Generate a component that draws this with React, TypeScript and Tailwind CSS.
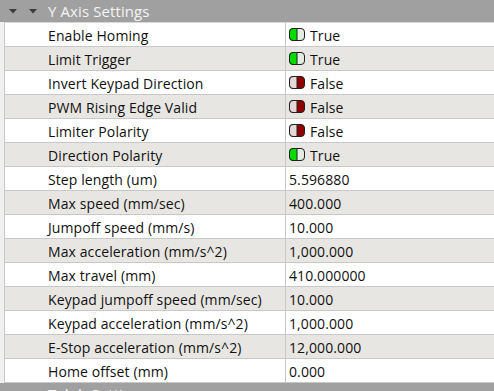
const rows: [string, string | boolean][] = [
  ["Enable Homing", true],
  ["Limit Trigger", true],
  ["Invert Keypad Direction", false],
  ["PWM Rising Edge Valid", false],
  ["Limiter Polarity", false],
  ["Direction Polarity", true],
  ["Step length (um)", "5.596880"],
  ["Max speed (mm/sec)", "400.000"],
  ["Jumpoff speed (mm/s)", "10.000"],
  ["Max acceleration (mm/s^2)", "1,000.000"],
  ["Max travel (mm)", "410.000000"],
  ["Keypad jumpoff speed (mm/sec)", "10.000"],
  ["Keypad acceleration (mm/s^2)", "1,000.000"],
  ["E-Stop acceleration (mm/s^2)", "12,000.000"],
  ["Home offset (mm)", "0.000"],
];

function Toggle({ on }: { on: boolean }) {
  return (
    <svg width="16" height="13" viewBox="0 0 16 13" className="shrink-0">
      <rect x="0.5" y="0.5" width="15" height="12" rx="3.5" fill={on ? "#e4ece4" : "#900000"} stroke="#202020" />
      <path
        d="M4 0.5 H8 V12.5 H4 A3.5 3.5 0 0 1 0.5 9 V4 A3.5 3.5 0 0 1 4 0.5 Z"
        fill={on ? "#00dc00" : "#e6d8d8"}
        stroke="#202020"
      />
    </svg>
  );
}

function Caret() {
  return (
    <svg width="8" height="5" viewBox="0 0 8 5">
      <path d="M0 0 H8 L4 4.5 Z" fill="#3c3c3c" />
    </svg>
  );
}

export default function App() {
  return (
    <div
      className="w-[494px] h-[391px] overflow-hidden bg-white text-[14px] text-[#111] tracking-[0.1px]"
      style={{ fontFamily: '"Segoe UI", "Open Sans", "Noto Sans", sans-serif' }}
    >
      {/* group header */}
      <div className="h-[22px] bg-[#a0a0a0] flex items-center text-[#f4f4f4] text-[15px]">
        <div className="w-[24px] flex justify-center pl-[2px]">
          <Caret />
        </div>
        <div className="w-[18px] flex justify-center">
          <Caret />
        </div>
        <span className="pl-[6px]">Y Axis Settings</span>
      </div>

      <div className="flex">
        <div className="w-[5px] bg-[#f0f0f0] border-r border-[#c8c8c8]" />
        <div className="flex-1 border-t border-[#d8d8d8]">
          {rows.map(([label, value], i) => (
            <div
              key={label}
              className={`flex h-[24px] border-b border-[#c8c8c8] ${i % 2 ? "bg-[#e8e6e3]" : "bg-white"}`}
            >
              <div className="w-[281px] pl-[43px] pt-[1px] flex items-center border-r border-[#c8c8c8]">{label}</div>
              <div className="flex-1 flex items-center pl-[3px] gap-[5px]">
                {typeof value === "boolean" ? (
                  <>
                    <Toggle on={value} />
                    <span className="pt-[1px]">{value ? "True" : "False"}</span>
                  </>
                ) : (
                  <span className="pt-[1px]">{value}</span>
                )}
              </div>
            </div>
          ))}
        </div>
      </div>

      <div className="h-[22px] bg-[#a0a0a0] flex items-center text-[#f4f4f4] text-[15px]">
        <span className="pl-[48px]">Tab b Settings</span>
      </div>
    </div>
  );
}
